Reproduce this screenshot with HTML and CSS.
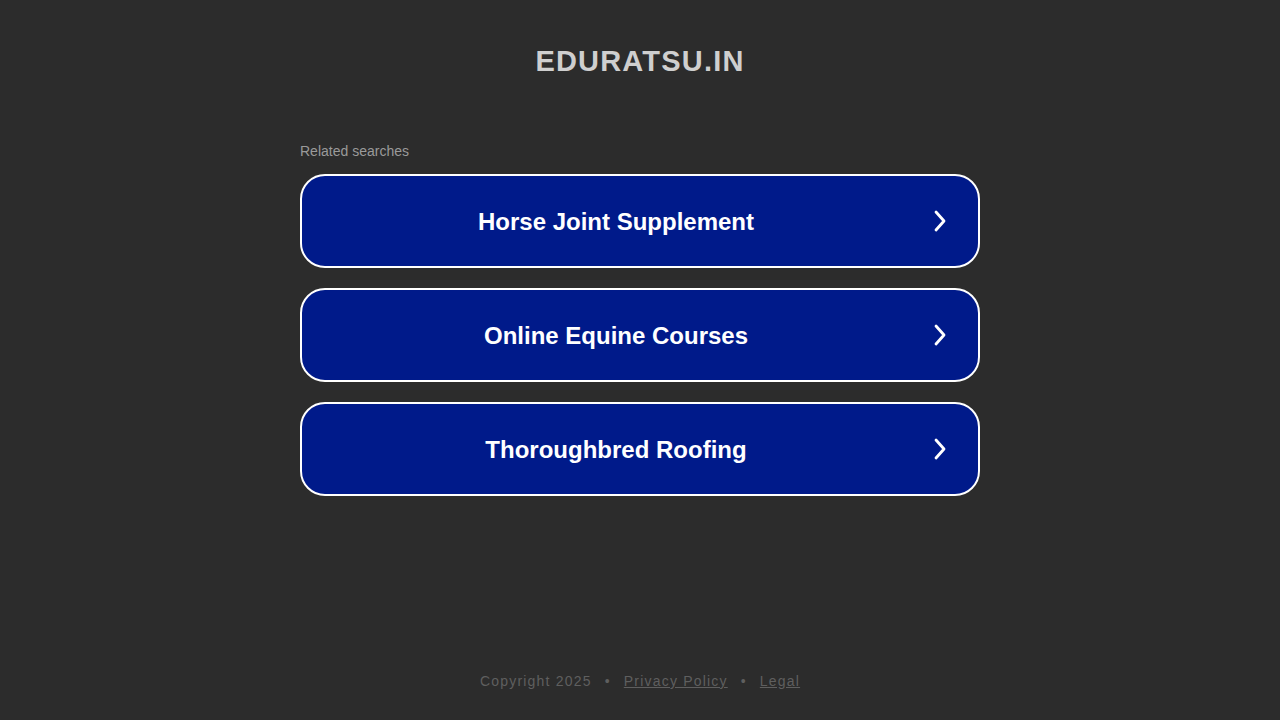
FILE: index.html
```html
<!DOCTYPE html>
<html>
<head>
<meta charset="utf-8">
<link rel="stylesheet" href="styles.css">
</head>
<body>
<div class="page">
  <header class="header"><h1 class="domain">EDURATSU.IN</h1></header>
  <main class="main">
    <div class="label">Related searches</div>
    <div class="list">
      <a class="item" href="#"><span class="item-text">Horse Joint Supplement</span><svg class="chev" viewBox="0 0 16 24" width="16" height="24"><path d="M4 3 L12 12 L4 21" fill="none" stroke="#fff" stroke-width="2.8" stroke-linecap="round" stroke-linejoin="round"/></svg></a>
      <a class="item" href="#"><span class="item-text">Online Equine Courses</span><svg class="chev" viewBox="0 0 16 24" width="16" height="24"><path d="M4 3 L12 12 L4 21" fill="none" stroke="#fff" stroke-width="2.8" stroke-linecap="round" stroke-linejoin="round"/></svg></a>
      <a class="item" href="#"><span class="item-text">Thoroughbred Roofing</span><svg class="chev" viewBox="0 0 16 24" width="16" height="24"><path d="M4 3 L12 12 L4 21" fill="none" stroke="#fff" stroke-width="2.8" stroke-linecap="round" stroke-linejoin="round"/></svg></a>
    </div>
  </main>
  <footer class="footer">
    <span>Copyright 2025</span><span class="dot">•</span><a href="#">Privacy Policy</a><span class="dot">•</span><a href="#">Legal</a>
  </footer>
</div>
</body>
</html>
```
FILE: styles.css
```css
html, body {
  margin: 0;
  padding: 0;
  background: #2c2c2c;
  font-family: "Liberation Sans", Arial, sans-serif;
}
.page {
  height: 720px;
  display: flex;
  flex-direction: column;
  align-items: center;
}
.header {
  padding-top: 43px;
  height: 97px;
  box-sizing: border-box;
}
.domain {
  margin: 0;
  font-size: 29px;
  font-weight: bold;
  color: #cfcfcf;
  letter-spacing: 1.2px;
  line-height: 36px;
}
.main {
  width: 680px;
  padding-top: 46px;
}
.label {
  font-size: 14px;
  color: #9a9a9a;
  line-height: 16px;
  margin-bottom: 15px;
}
.list {
  display: flex;
  flex-direction: column;
  gap: 20px;
}
.item {
  position: relative;
  display: flex;
  align-items: center;
  justify-content: center;
  height: 94px;
  box-sizing: border-box;
  border: 2px solid #ffffff;
  border-radius: 25px;
  background: #001a8a;
  text-decoration: none;
}
.item-text {
  color: #ffffff;
  font-size: 24px;
  font-weight: bold;
  margin-right: 48px;
  padding-top: 2px;
}
.chev {
  position: absolute;
  right: 30px;
  top: 33px;
}
.footer {
  margin-top: auto;
  padding-bottom: 30px;
  font-size: 14px;
  letter-spacing: 1.2px;
  color: #5f5f5f;
  line-height: 18px;
}
.footer a {
  color: #5f5f5f;
}
.dot {
  margin: 0 13px;
}
```
